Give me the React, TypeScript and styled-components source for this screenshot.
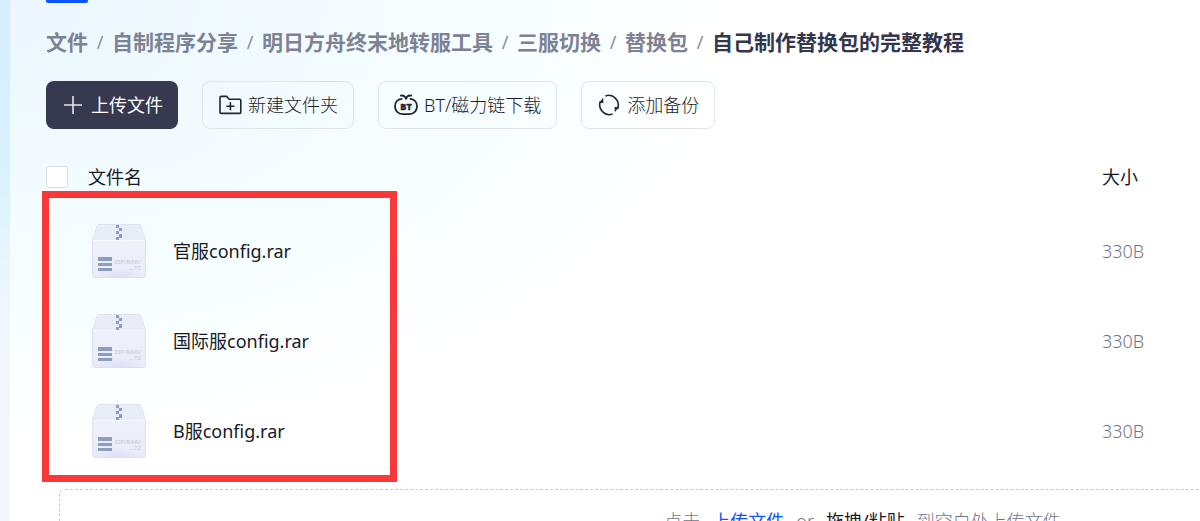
import React from "react";
import styled, { createGlobalStyle } from "styled-components";

const GlobalStyle = createGlobalStyle`
  *, *::before, *::after { box-sizing: border-box; }
  body {
    margin: 0;
    font-family: "Noto Sans", "Noto Sans CJK SC", sans-serif;
    font-size: 18px;
    line-height: 26px;
    color: #171a26;
  }
`;

const Page = styled.div`
  display: flex;
  height: 100vh;
  overflow: hidden;
  background: linear-gradient(180deg, #d6eeff 0, #d6f1ff 160px, #f0f8fd 310px, #f5f7fc 380px);
`;

const Main = styled.main`
  flex: 1;
  min-width: 0;
  margin-left: 10px;
  padding-left: 36px;
  background:
    radial-gradient(ellipse 720px 440px at 0 0, #ebf6ff 0, #f1fbff 35%, #f7feff 70%, rgba(255, 255, 255, 0) 100%),
    #fff;
`;

const TabBar = styled.div`
  height: 3px;
`;

const ActiveTab = styled.div`
  width: 42px;
  height: 3px;
  border-radius: 0 0 2px 2px;
  background: #0d53ff;
`;

const Breadcrumb = styled.nav`
  display: flex;
  align-items: center;
  margin-top: 24px;
  font-size: 21px;
  font-weight: 700;
  line-height: 30px;
  white-space: nowrap;
`;

const Crumb = styled.a`
  color: #7d8294;
  text-decoration: none;
`;

const CurrentCrumb = styled.span`
  color: #33364d;
`;

const Separator = styled.span`
  width: 24px;
  text-align: center;
  font-size: 18px;
  font-weight: 400;
  color: #8a8e9e;
`;

const Toolbar = styled.div`
  display: flex;
  gap: 24px;
  margin-top: 24px;
`;

const ToolButton = styled.button<{ $primary?: boolean }>`
  display: flex;
  align-items: center;
  gap: 6px;
  height: 48px;
  padding: 0 15px;
  border: ${(p) => (p.$primary ? "none" : "1px solid #e0e3e8")};
  border-radius: 8px;
  background: ${(p) => (p.$primary ? "#363950" : "transparent")};
  color: ${(p) => (p.$primary ? "#fff" : "#1a1d30")};
  font: inherit;
  font-weight: ${(p) => (p.$primary ? 400 : 300)};
  white-space: nowrap;
  cursor: pointer;
`;

const Icon = styled.svg`
  flex: none;
  width: 24px;
  height: 24px;
  fill: none;
`;

const Listing = styled.div`
  position: relative;
  margin-top: 19px;
`;

const FileTable = styled.table`
  width: 100%;
  table-layout: fixed;
  border-collapse: collapse;
`;

const HeadCell = styled.th<{ $width?: number }>`
  width: ${(p) => (p.$width ? `${p.$width}px` : "auto")};
  height: 58px;
  padding: 0;
  text-align: left;
  font-weight: 400;
`;

const HeadName = styled.label`
  display: flex;
  align-items: center;
  gap: 20px;
`;

const CheckBox = styled.input`
  appearance: none;
  width: 22px;
  height: 22px;
  margin: 0;
  border: 1px solid #dcdee2;
  border-radius: 3px;
  background: #fff;
`;

const Cell = styled.td`
  height: 90px;
  padding: 0;
`;

const SizeCell = styled(Cell)`
  font-weight: 300;
  color: #71768a;
`;

const FileEntry = styled.div`
  display: flex;
  align-items: center;
  gap: 27px;
  padding-left: 46px;
`;

const ArchiveSvg = styled.svg`
  flex: none;
  width: 54px;
  height: 54px;
`;

const Highlight = styled.div`
  position: absolute;
  top: 43px;
  left: -4px;
  width: 355px;
  bottom: -6px;
  border: 7px solid #fb3838;
  pointer-events: none;
`;

const DropZone = styled.div`
  display: flex;
  justify-content: center;
  gap: 12px;
  height: 120px;
  margin: 13px -466px 0 13px;
  padding-top: 18px;
  border: 1px dashed #c9cacd;
  border-radius: 6px;
  font-weight: 300;
  color: #71768a;
  white-space: nowrap;
`;

const UploadLink = styled.a`
  color: #0d53ff;
  font-weight: 400;
  text-decoration: none;
`;

const Strong = styled.span`
  color: #171a26;
  font-weight: 400;
`;

const PlusIcon = () => (
  <Icon viewBox="0 0 24 24" stroke="#e4e5ea" strokeWidth="1.6">
    <path d="M12 3v18M3 12h18" />
  </Icon>
);

const NewFolderIcon = () => (
  <Icon viewBox="0 0 24 24" stroke="#22252e" strokeWidth="1.6" strokeLinejoin="round" strokeLinecap="round">
    <path d="M2 19.400V4.600Q2 3.400 3.200 3.400H8.600L11.200 6.200H21.600Q22.800 6.200 22.800 7.400V19.200Q22.800 20.400 21.600 20.400H3.200Q2 20.400 2 19.400Z" />
    <path d="M12.400 9.800v7M8.900 13.300h7" />
  </Icon>
);

const BtIcon = () => (
  <Icon viewBox="0 0 24 24" stroke="#22252e" strokeWidth="1.8" strokeLinecap="round">
    <path d="M7.600 5.800C3.800 6.200 1 9.200 1 13.500c0 4.500 3.300 7.600 7.400 7.600h7.200c4.100 0 7.400-3.100 7.400-7.600 0-4.300-2.800-7.300-6.600-7.700" />
    <path d="M6.800 2.600c3-.4 4.700.8 5.200 3.800.5-3 2.200-4.200 5.200-3.800" />
    <text
      x="12"
      y="17"
      textAnchor="middle"
      fontFamily="Noto Sans, sans-serif"
      fontSize="9"
      fontWeight="800"
      fill="#22252e"
      stroke="#22252e"
      strokeWidth="0.4"
    >
      BT
    </text>
  </Icon>
);

const BackupIcon = () => (
  <Icon viewBox="0 0 24 24" stroke="#22252e" strokeWidth="1.6">
    <path d="M8.400 2.900A9.700 9.700 0 0 1 20.600 15.600" />
    <path d="M15.600 21.100A9.700 9.700 0 0 1 3.400 8.400" />
    <path d="M21.600 14.400L17.600 13.800L17.800 19.200Z M2.400 9.600L6.400 10.200L6.200 4.800Z" fill="#22252e" stroke="none" />
  </Icon>
);

const ArchiveIcon = () => (
  <ArchiveSvg viewBox="0 0 54 54">
    <defs>
      <linearGradient id="box" x1="0" y1="0" x2="0" y2="1">
        <stop offset="0" stopColor="#f0f3fb" />
        <stop offset="1" stopColor="#eaecf9" />
      </linearGradient>
      <radialGradient id="glow" cx="0.5" cy="1" r="0.5">
        <stop offset="0" stopColor="#dedff7" />
        <stop offset="1" stopColor="#dedff7" stopOpacity="0" />
      </radialGradient>
    </defs>
    <path
      d="M7 .5H47Q48.500 .5 49 2L53.500 16V51Q53.500 53.500 51 53.500H3Q.5 53.500 .5 51V16L5 2Q5.500 .5 7 .5Z"
      fill="url(#box)"
      stroke="#dde1ec"
    />
    <path d="M6 1.500H48L52.500 16H1.500Z" fill="#e8ecf7" />
    <path d="M1 16.500H53" stroke="#f7f9fd" />
    <rect x="1" y="34" width="52" height="19" fill="url(#glow)" />
    <path d="M24 1h3v3h-3zM27 4h3v3h-3zM24 7h3v3h-3zM27 10h3v4h-3zM24 13h3v3h-3z" fill="#8e9cbf" />
    <path d="M6 33h14v4H6zM6 39h14v3H6zM6 44h14v3H6z" fill="#8e9dbf" />
    <g fontFamily="Noto Sans, sans-serif" fontSize="6" fontWeight="700" fill="#cfd3df" textAnchor="end">
      <text x="49" y="39.500">ZIP/RAR/</text>
      <text x="49" y="45.500">...7Z</text>
    </g>
  </ArchiveSvg>
);

const parents = ["文件", "自制程序分享", "明日方舟终末地转服工具", "三服切换", "替换包"];

const files = [
  { name: "官服config.rar", size: "330B" },
  { name: "国际服config.rar", size: "330B" },
  { name: "B服config.rar", size: "330B" },
];

export default function App() {
  return (
    <>
      <GlobalStyle />
      <Page>
        <Main>
          <TabBar>
            <ActiveTab />
          </TabBar>
          <Breadcrumb>
            {parents.map((name) => (
              <React.Fragment key={name}>
                <Crumb href="#">{name}</Crumb>
                <Separator>/</Separator>
              </React.Fragment>
            ))}
            <CurrentCrumb>自己制作替换包的完整教程</CurrentCrumb>
          </Breadcrumb>
          <Toolbar>
            <ToolButton $primary>
              <PlusIcon />
              上传文件
            </ToolButton>
            <ToolButton>
              <NewFolderIcon />
              新建文件夹
            </ToolButton>
            <ToolButton>
              <BtIcon />
              BT/磁力链下载
            </ToolButton>
            <ToolButton>
              <BackupIcon />
              添加备份
            </ToolButton>
          </Toolbar>
          <Listing>
            <FileTable>
              <thead>
                <tr>
                  <HeadCell>
                    <HeadName>
                      <CheckBox type="checkbox" />
                      文件名
                    </HeadName>
                  </HeadCell>
                  <HeadCell $width={98}>大小</HeadCell>
                </tr>
              </thead>
              <tbody>
                {files.map((file) => (
                  <tr key={file.name}>
                    <Cell>
                      <FileEntry>
                        <ArchiveIcon />
                        {file.name}
                      </FileEntry>
                    </Cell>
                    <SizeCell>{file.size}</SizeCell>
                  </tr>
                ))}
              </tbody>
            </FileTable>
            <Highlight />
          </Listing>
          <DropZone>
            <span>点击</span>
            <UploadLink href="#">上传文件</UploadLink>
            <span>or</span>
            <Strong>拖拽/粘贴</Strong>
            <span>到空白处上传文件</span>
          </DropZone>
        </Main>
      </Page>
    </>
  );
}
